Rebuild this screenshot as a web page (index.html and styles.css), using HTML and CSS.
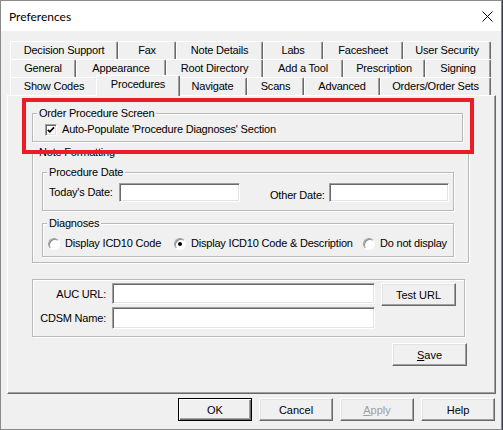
FILE: index.html
```html
<!DOCTYPE html>
<html>
<head>
	<title>Preferences</title>
	<link rel="stylesheet" href="styles.css">
</head>
<body>
	<div class="window">
		<div class="titlebar">
			<span class="title">Preferences</span>
			<svg class="close" width="11" height="11" viewBox="0 0 11 11">
				<path d="M0.5 0.5 L10.5 10.5 M10.5 0.5 L0.5 10.5" stroke="#000" stroke-width="1" fill="none"/>
			</svg>
		</div>

		<div class="content">
			<div class="tabs">
				<div class="tab-row row-1">
					<div class="tab">Decision Support</div>
					<div class="tab">Fax</div>
					<div class="tab">Note Details</div>
					<div class="tab">Labs</div>
					<div class="tab">Facesheet</div>
					<div class="tab">User Security</div>
				</div>
				<div class="tab-row row-2">
					<div class="tab">General</div>
					<div class="tab">Appearance</div>
					<div class="tab">Root Directory</div>
					<div class="tab">Add a Tool</div>
					<div class="tab">Prescription</div>
					<div class="tab">Signing</div>
				</div>
				<div class="tab-row row-3">
					<div class="tab">Show Codes</div>
					<div class="tab selected">Procedures</div>
					<div class="tab">Navigate</div>
					<div class="tab">Scans</div>
					<div class="tab">Advanced</div>
					<div class="tab">Orders/Order Sets</div>
				</div>
			</div>

			<div class="panel">
				<fieldset class="group group-order">
					<legend>Order Procedure Screen</legend>
					<label class="check-line">
						<span class="checkbox">
							<svg width="8" height="8" viewBox="0 0 8 8"><polyline points="0.8,3.8 2.8,5.8 7,1.4" fill="none" stroke="#000" stroke-width="1.7"/></svg>
						</span>
						Auto-Populate 'Procedure Diagnoses' Section
					</label>
				</fieldset>

				<fieldset class="group group-note">
					<legend>Note Formatting</legend>
					<fieldset class="group group-date">
						<legend>Procedure Date</legend>
						<div class="date-row">
							<span class="lbl lbl-today">Today's Date:</span>
							<input type="text" class="field field-today">
							<span class="lbl lbl-other">Other Date:</span>
							<input type="text" class="field field-other">
						</div>
					</fieldset>
					<fieldset class="group group-diag">
						<legend>Diagnoses</legend>
						<div class="radio-row">
							<label class="radio-opt opt-code"><span class="radio"></span>Display ICD10 Code</label>
							<label class="radio-opt opt-desc"><span class="radio checked"></span>Display ICD10 Code &amp; Description</label>
							<label class="radio-opt"><span class="radio"></span>Do not display</label>
						</div>
					</fieldset>
				</fieldset>

				<fieldset class="group group-auc">
					<div class="auc-grid">
						<span class="lbl lbl-right">AUC URL:</span>
						<input type="text" class="field field-auc">
						<button class="btn">Test URL</button>
						<span class="lbl lbl-right">CDSM Name:</span>
						<input type="text" class="field field-cdsm">
					</div>
				</fieldset>

				<button class="btn btn-save"><u>S</u>ave</button>
			</div>

			<div class="dialog-buttons">
				<button class="btn btn-default">OK</button>
				<button class="btn">Cancel</button>
				<button class="btn btn-disabled"><u>A</u>pply</button>
				<button class="btn">Help</button>
			</div>
		</div>

		<div class="highlight"></div>
	</div>
</body>
</html>
```

FILE: styles.css
```css
body {
	margin: 0;
	background-color: #3a3d44;
	font-family: "Liberation Sans", Arial, sans-serif;
	font-size: 11px;
	letter-spacing: -0.2px;
	color: #000;
}

.window {
	position: relative;
	width: 502px;
	height: 430px;
	box-sizing: border-box;
	border: 1px solid #8a8a8a;
	background-color: #f0f0f0;
	display: flex;
	flex-direction: column;
}

.titlebar {
	height: 30px;
	flex-shrink: 0;
	background-color: #fff;
	display: flex;
	align-items: center;
	justify-content: space-between;
	padding: 0 8px;
}

.title {
	font-family: Lato, "Noto Sans", sans-serif;
	font-size: 12px;
	letter-spacing: 0;
	padding-top: 1px;
}

.close {
	display: block;
}

.content {
	flex: 1;
	display: flex;
	flex-direction: column;
	padding: 10px 5px 7px 6px;
}

/* tabs */
.tabs {
	margin: 0 4px 0 3px;
}

.tab-row {
	display: grid;
	height: 18px;
}

.row-1 { grid-template-columns: 108px 58px 87px 60px 80px 88px; }
.row-2 { grid-template-columns: 66px 90px 97px 80px 82px 66px; }
.row-3 { grid-template-columns: 88px 80px 69px 57px 76px 111px; }

.tab {
	box-sizing: border-box;
	height: 18px;
	line-height: 13px;
	background-color: #f0f0f0;
	border-top: 1px solid #fff;
	border-left: 1px solid #fff;
	border-right: 1px solid #696969;
	border-radius: 2px 2px 0 0;
	box-shadow: inset -1px 0 0 #a0a0a0;
	display: flex;
	align-items: center;
	justify-content: center;
	white-space: nowrap;
}

.tab.selected {
	position: relative;
	z-index: 2;
	height: 21px;
	margin: -2px -2px 0 -2px;
	align-items: flex-start;
	padding-top: 2px;
}

/* page */
.panel {
	height: 299px;
	box-sizing: border-box;
	border: 1px solid;
	border-color: #fff #696969 #696969 #fff;
	box-shadow: inset -1px -1px 0 #a0a0a0;
	padding: 11px 0 0 24px;
	display: flex;
	flex-direction: column;
	align-items: flex-start;
}

.group {
	margin: 0;
	padding: 0;
	min-width: 0;
	box-sizing: border-box;
	border: 1px solid #b9b9b9;
	box-shadow: inset 1px 1px 0 #fff, 1px 1px 0 #fff;
}

.group legend {
	padding: 0 2px;
	margin-left: 4px;
	line-height: 13px;
	background-color: #f0f0f0;
}

.group-order {
	width: 431px;
}

.check-line {
	display: flex;
	align-items: center;
	height: 13px;
	line-height: 13px;
	padding: 3px 0 5px 12px;
}

.checkbox {
	box-sizing: border-box;
	width: 12px;
	height: 12px;
	margin-right: 5px;
	background-color: #fff;
	border: 1px solid;
	border-color: #a0a0a0 #fff #fff #a0a0a0;
	box-shadow: inset 1px 1px 0 #696969, inset -1px -1px 0 #e3e3e3;
	display: flex;
	align-items: center;
	justify-content: center;
}

.checkbox svg {
	display: block;
}

.group-note {
	width: 437px;
	margin-top: 4px;
	padding: 7px 0 5px 9px;
}

.group-note > legend {
	margin-left: -5px;
}

.group-date,
.group-diag {
	width: 412px;
}

.group-diag {
	margin-top: 6px;
}

.date-row {
	display: flex;
	align-items: center;
	padding: 4px 0 8px 6px;
}

.lbl {
	line-height: 13px;
	white-space: nowrap;
}

.lbl-today {
	width: 70px;
}

.lbl-other {
	width: 59px;
	margin-left: 30px;
	padding-top: 5px;
}

.field {
	box-sizing: border-box;
	margin: 0;
	padding: 0 3px;
	height: 19px;
	font: inherit;
	background-color: #fff;
	border: 1px solid;
	border-color: #a0a0a0 #fff #fff #a0a0a0;
	box-shadow: inset 1px 1px 0 #696969, inset -1px -1px 0 #e3e3e3;
	outline: none;
}

.field-today { width: 121px; }
.field-other { width: 120px; }

.radio-row {
	display: flex;
	padding: 7px 0 6px 5px;
}

.radio-opt {
	display: flex;
	align-items: center;
	height: 13px;
	line-height: 13px;
	white-space: nowrap;
}

.opt-code { width: 126px; }
.opt-desc { width: 189px; }

.radio {
	box-sizing: border-box;
	width: 12px;
	height: 12px;
	margin-right: 5px;
	border-radius: 50%;
	background-color: #fff;
	border: 1px solid;
	border-color: #a0a0a0 #fff #fff #a0a0a0;
	box-shadow: inset 1px 1px 0 #8a8a8a;
	display: flex;
	align-items: center;
	justify-content: center;
}

.radio.checked::after {
	content: "";
	width: 4px;
	height: 4px;
	border-radius: 50%;
	background-color: #000;
}

.group-auc {
	width: 433px;
	margin-top: 16px;
}

.auc-grid {
	display: grid;
	grid-template-columns: 73px 263px 75px;
	grid-template-rows: 23px 22px;
	column-gap: 6px;
	row-gap: 1px;
	padding: 3px 0 7px 0;
}

.lbl-right {
	text-align: right;
	align-self: center;
}

.field-auc {
	height: 21px;
}

.field-cdsm {
	height: 22px;
}

.btn {
	box-sizing: border-box;
	width: 75px;
	height: 23px;
	margin: 0;
	padding: 0;
	font: inherit;
	color: #000;
	background-color: #f0f0f0;
	border: 1px solid;
	border-color: #fff #696969 #696969 #fff;
	box-shadow: inset -1px -1px 0 #a0a0a0, inset 1px 1px 0 #e3e3e3;
}

.btn-save {
	align-self: flex-end;
	margin: 6px 28px 0 0;
}

.dialog-buttons {
	display: flex;
	justify-content: flex-end;
	gap: 7px;
	margin: 4px 1px 0 0;
}

.dialog-buttons .btn {
	width: 74px;
}

.btn-default {
	border-color: #000;
	box-shadow: inset 1px 1px 0 #fff, inset -1px -1px 0 #696969, inset -2px -2px 0 #a0a0a0;
}

.btn-disabled {
	color: #a0a0a0;
}

/* annotation drawn over the dialog */
.highlight {
	position: absolute;
	left: 21px;
	top: 97px;
	width: 452px;
	height: 56px;
	box-sizing: border-box;
	border: 4px solid #ed1c24;
}
```
